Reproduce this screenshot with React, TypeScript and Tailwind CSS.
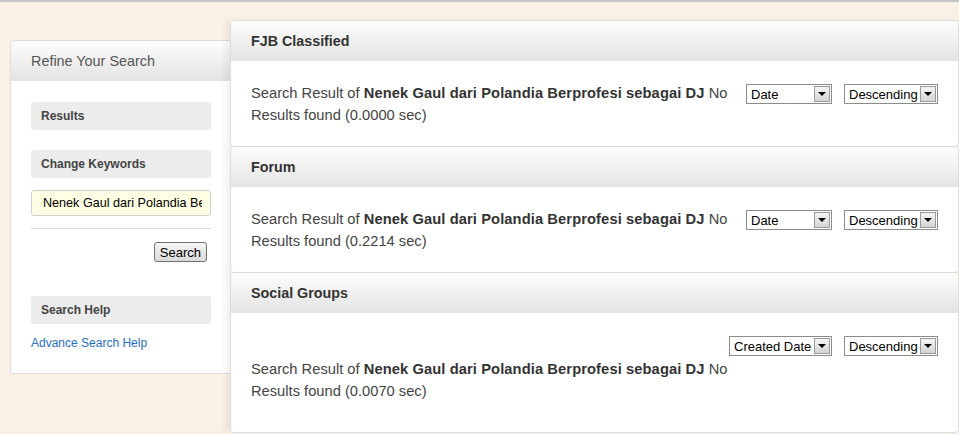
import React from "react";

const Select = ({ label, width }: { label: string; width: string }) => {
  return (
    <div className={`flex h-[20px] items-center justify-between border border-[#8c8c8c] bg-white pl-[4px] pr-[1px] ${width}`}>
      <span className="whitespace-nowrap pt-px text-[13px] leading-none text-black">{label}</span>
      <span className="flex h-[16px] w-[16px] shrink-0 items-center justify-center border border-[#9a9a9a] bg-gradient-to-b from-[#f4f4f4] to-[#d4d4d4]">
        <span className="h-0 w-0 border-x-[4px] border-t-[4px] border-x-transparent border-t-black" />
      </span>
    </div>
  );
};

const ResultText = ({ time }: { time: string }) => (
  <p className="w-[482px] text-[14.7px] leading-[22px] text-[#444]">
    Search Result of <b className="tracking-[0.1px] text-[#333]">Nenek Gaul dari Polandia Berprofesi sebagai DJ</b> No Results found ({time} sec)
  </p>
);

const PanelHeader = ({ title }: { title: string }) => (
  <div className="flex h-[40px] items-center rounded-t-[4px] bg-gradient-to-b from-[#fdfdfd] to-[#e4e4e4] pl-5 pt-[2px] text-[14.3px] font-bold text-[#333]">
    {title}
  </div>
);

const SideBox = ({ title }: { title: string }) => (
  <div className="flex h-[28px] w-[180px] items-center rounded-[3px] bg-[#ececec] pl-[10px] text-[12px] font-bold text-[#444]">
    {title}
  </div>
);

export default function App() {
  return (
    <div className="h-[434px] w-[959px] overflow-hidden border-t-2 border-[#c4c4c4] bg-[#f9f1e6] font-['Liberation_Sans',Arial,sans-serif]">
      <div className="flex">
        <div className="ml-[10px] mt-[38px] h-[334px] w-[220px] rounded-l-[4px] border border-r-0 border-[#dcdcdc] bg-white">
          <div className="flex h-[40px] items-center rounded-tl-[4px] bg-gradient-to-b from-[#fdfdfd] to-[#e3e3e3] pl-5 pt-[2px] text-[14.4px] text-[#555]">
            Refine Your Search
          </div>
          <div className="flex flex-col pl-5 pt-[21px]">
            <SideBox title="Results" />
            <div className="mt-[20px]">
              <SideBox title="Change Keywords" />
            </div>
            <input
              readOnly
              value="Nenek Gaul dari Polandia Berprofesi sebagai DJ"
              className="mt-[12px] h-[26px] w-[180px] rounded-[3px] border border-[#d0d0d0] bg-[#fffde3] pl-[11px] pr-[8px] text-[12.6px] text-black outline-none"
            />
            <div className="mt-[12px] h-px w-[180px] bg-[#dadada]" />
            <div className="flex w-[180px] justify-end pr-[4px] pt-[13px]">
              <button className="h-[20px] rounded-[3px] border border-[#707070] bg-gradient-to-b from-[#f6f6f6] to-[#dadada] px-[5px] text-[13px] leading-none text-black">
                Search
              </button>
            </div>
            <div className="mt-[34px]">
              <SideBox title="Search Help" />
            </div>
            <a className="mt-[10px] text-[12px] text-[#1f6ec4]">Advance Search Help</a>
          </div>
        </div>

        <div className="mt-[18px] flex w-[729px] flex-col shadow-[-5px_0_6px_rgba(0,0,0,0.05)]">
          <div className="rounded-[4px] border border-[#dcdcdc] bg-white">
            <PanelHeader title="FJB Classified" />
            <div className="flex pb-[20px] pl-5 pr-5 pt-[21px]">
              <ResultText time="0.0000" />
              <div className="ml-auto flex gap-[12px] pt-[2px]">
                <Select label="Date" width="w-[86px]" />
                <Select label="Descending" width="w-[94px]" />
              </div>
            </div>
          </div>

          <div className="-mt-px rounded-[4px] border border-[#dcdcdc] bg-white">
            <PanelHeader title="Forum" />
            <div className="flex pb-[20px] pl-5 pr-5 pt-[21px]">
              <ResultText time="0.2214" />
              <div className="ml-auto flex gap-[12px] pt-[2px]">
                <Select label="Date" width="w-[86px]" />
                <Select label="Descending" width="w-[94px]" />
              </div>
            </div>
          </div>

          <div className="-mt-px rounded-[4px] border border-[#dcdcdc] bg-white">
            <PanelHeader title="Social Groups" />
            <div className="flex flex-col pb-[30px] pl-5 pr-5 pt-[21px]">
              <div className="flex justify-end gap-[12px] py-[2px]">
                <Select label="Created Date" width="w-[103px]" />
                <Select label="Descending" width="w-[94px]" />
              </div>
              <ResultText time="0.0070" />
            </div>
          </div>
        </div>
      </div>
    </div>
  );
}
